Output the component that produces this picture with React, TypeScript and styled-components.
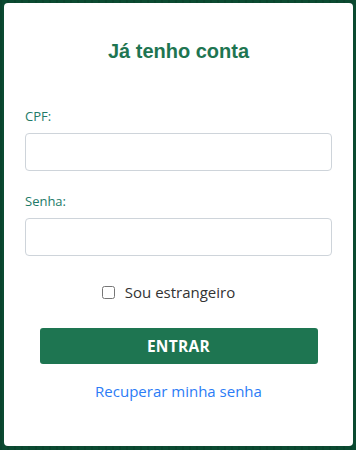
import React from "react";
import styled, { createGlobalStyle } from "styled-components";

const Global = createGlobalStyle`
  html, body { margin: 0; padding: 0; }
  body {
    background: #0b4a31;
    font-family: "Open Sans", "Noto Sans", sans-serif;
  }
  * { box-sizing: border-box; }
`;

const Page = styled.div`
  padding: 3px 3px 4px 4px;
  height: 450px;
  background:
    repeating-linear-gradient(90deg, rgba(0,0,0,0.08) 0 2px, transparent 2px 7px),
    #0b4a31;
`;

const Card = styled.form`
  background: #fff;
  border-radius: 4px;
  height: 443px;
  padding: 36px 21px 0 21px;
  display: flex;
  flex-direction: column;
`;

const Title = styled.h2`
  margin: 0 0 43px;
  font-family: "Liberation Sans", Arial, sans-serif;
  font-weight: 700;
  font-size: 20px;
  line-height: 24px;
  color: #1e7551;
  text-align: center;
`;

const Field = styled.div`
  display: flex;
  flex-direction: column;
  margin-bottom: ${(p: { $mb: number }) => p.$mb}px;
`;

const Label = styled.label`
  font-size: 13px;
  line-height: 20px;
  color: #227a68;
  margin-bottom: 7px;
`;

const Input = styled.input`
  height: 38px;
  border: 1px solid #ced4da;
  border-radius: 4px;
  padding: 6px 12px;
  font-size: 15px;
  outline: none;
`;

const CheckRow = styled.label`
  display: flex;
  align-items: center;
  justify-content: center;
  gap: 10px;
  padding-right: 20px;
  font-size: 15px;
  line-height: 22px;
  color: #333;
  margin-bottom: 25px;
`;

const Box = styled.input`
  width: 13px;
  height: 13px;
  margin: 0;
`;

const Button = styled.button`
  align-self: center;
  width: 278px;
  height: 36px;
  border: none;
  border-radius: 3px;
  background: #1e7551;
  color: #fff;
  font-family: "Open Sans", "Noto Sans", sans-serif;
  font-weight: 700;
  font-size: 15.5px;
  letter-spacing: 0.3px;
  margin-bottom: 16px;
`;

const Link = styled.a`
  text-align: center;
  font-size: 15px;
  line-height: 22px;
  color: #2b7cf6;
  text-decoration: none;
`;

export default function App() {
  return (
    <>
      <Global />
      <Page>
        <Card onSubmit={(e) => e.preventDefault()}>
          <Title>Já tenho conta</Title>
          <Field $mb={20}>
            <Label>CPF:</Label>
            <Input type="text" />
          </Field>
          <Field $mb={25}>
            <Label>Senha:</Label>
            <Input type="password" />
          </Field>
          <CheckRow>
            <Box type="checkbox" />
            Sou estrangeiro
          </CheckRow>
          <Button type="submit">ENTRAR</Button>
          <Link href="#">Recuperar minha senha</Link>
        </Card>
      </Page>
    </>
  );
}
